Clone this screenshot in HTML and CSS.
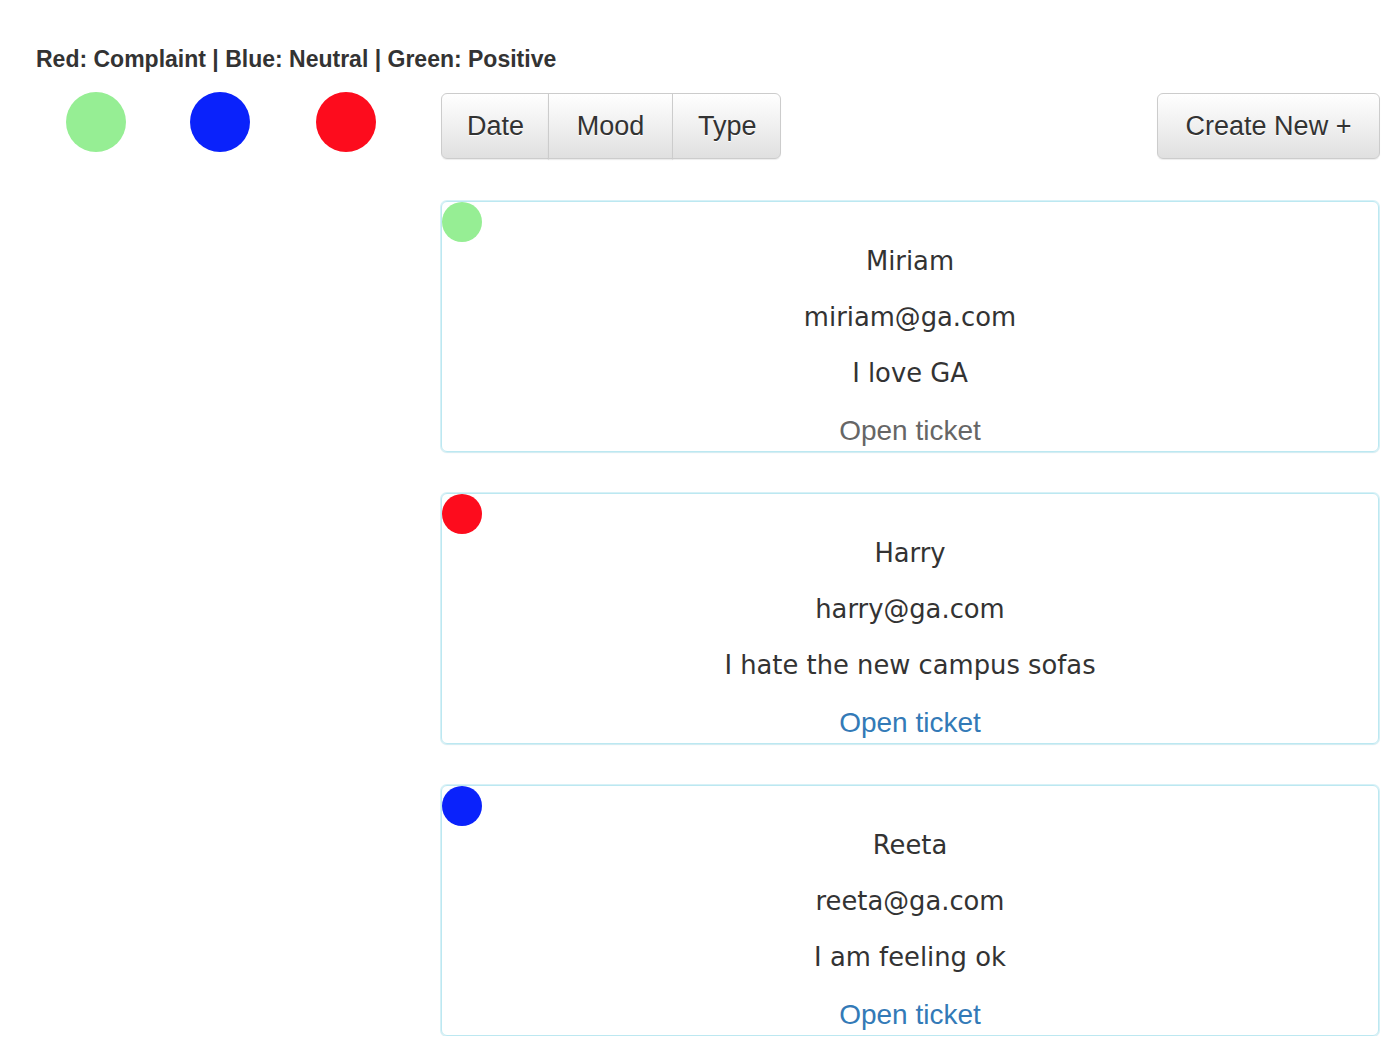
FILE: index.html
```html
<!DOCTYPE html>
<html>
<head>
<meta charset="utf-8">
<link rel="stylesheet" href="styles.css">
</head>
<body>
<div class="page">
  <div class="legend">Red: Complaint | Blue: Neutral | Green: Positive</div>
  <div class="main">
    <div class="side">
      <span class="dot dot-lg green"></span>
      <span class="dot dot-lg blue"></span>
      <span class="dot dot-lg red"></span>
    </div>
    <div class="content">
      <div class="toolbar">
        <div class="btn-group">
          <button class="btn">Date</button>
          <button class="btn">Mood</button>
          <button class="btn">Type</button>
        </div>
        <button class="btn btn-single">Create New +</button>
      </div>
      <div class="cards">
        <div class="card">
          <span class="dot dot-sm green card-dot"></span>
          <p class="line">Miriam</p>
          <p class="line">miriam@ga.com</p>
          <p class="line">I love GA</p>
          <a class="open open-visited" href="#">Open ticket</a>
        </div>
        <div class="card">
          <span class="dot dot-sm red card-dot"></span>
          <p class="line">Harry</p>
          <p class="line">harry@ga.com</p>
          <p class="line">I hate the new campus sofas</p>
          <a class="open" href="#">Open ticket</a>
        </div>
        <div class="card">
          <span class="dot dot-sm blue card-dot"></span>
          <p class="line">Reeta</p>
          <p class="line">reeta@ga.com</p>
          <p class="line">I am feeling ok</p>
          <a class="open" href="#">Open ticket</a>
        </div>
      </div>
    </div>
  </div>
</div>
</body>
</html>
```

FILE: styles.css
```css
html, body {
  margin: 0;
  padding: 0;
  background: #fff;
}
.page {
  padding: 44px 15px 0 36px;
  font-family: "Liberation Sans", Arial, sans-serif;
  color: #333;
}
.legend {
  font-weight: bold;
  font-size: 23px;
  line-height: 30px;
  height: 30px;
  color: #333;
}
.main {
  display: flex;
  margin-top: 18px;
}
.side {
  width: 405px;
  flex: none;
  display: flex;
  padding-left: 30px;
  box-sizing: border-box;
  align-items: flex-start;
}
.side .dot + .dot {
  margin-left: 64px;
}
.side .dot.red {
  margin-left: 66px;
}
.dot {
  display: block;
  border-radius: 50%;
  flex: none;
}
.dot-lg {
  width: 60px;
  height: 60px;
}
.dot-sm {
  width: 40px;
  height: 40px;
}
.green { background: #96ee94; }
.blue { background: #0a22fb; }
.red { background: #fd0c1d; }
.content {
  width: 938px;
  flex: none;
  display: flex;
  flex-direction: column;
  gap: 42px;
}
.toolbar {
  display: flex;
  justify-content: space-between;
  align-items: flex-start;
  height: 66px;
  margin-top: 1px;
}
.btn-group {
  display: flex;
}
.btn {
  font-family: "Liberation Sans", Arial, sans-serif;
  font-size: 27px;
  color: #333;
  height: 66px;
  padding: 0 25px;
  background: linear-gradient(to bottom, #fff 0, #e0e0e0 100%);
  border: 1px solid #ccc;
  border-radius: 6px;
  text-shadow: 0 1px 0 #fff;
  box-shadow: inset 0 1px 0 rgba(255,255,255,.15), 0 1px 1px rgba(0,0,0,.075);
  cursor: pointer;
}
.btn-group .btn {
  border-radius: 0;
  margin-left: -1px;
}
.btn-group .btn:first-child {
  margin-left: 0;
  border-radius: 6px 0 0 6px;
  width: 108px;
}
.btn-group .btn:nth-child(2) {
  width: 125px;
}
.btn-group .btn:last-child {
  border-radius: 0 6px 6px 0;
  width: 109px;
}
.btn-single {
  width: 223px;
  margin-right: -1px;
}
.cards {
  display: flex;
  flex-direction: column;
  gap: 41px;
}
.card {
  position: relative;
  height: 251px;
  box-sizing: border-box;
  border: 1px solid #bce8f1;
  border-radius: 6px;
  padding-top: 31px;
  text-align: center;
  box-shadow: 0 0 0 1px rgba(188,232,241,.6), 0 1px 2px rgba(0,0,0,.05);
}
.card-dot {
  position: absolute;
  left: 0;
  top: 0;
}
.line {
  margin: 0;
  font-family: "DejaVu Sans", Verdana, sans-serif;
  font-size: 25.8px;
  line-height: 56px;
  color: #333;
}
.open {
  display: block;
  font-size: 28px;
  line-height: 58px;
  margin-top: 1px;
  color: #337ab7;
  text-decoration: none;
}
.open-visited {
  color: #666;
}
```
